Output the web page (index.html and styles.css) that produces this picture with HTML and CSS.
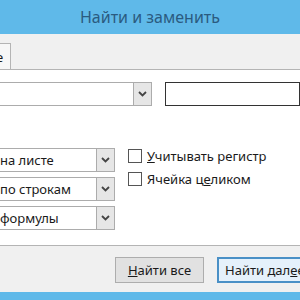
FILE: index.html
```html
<!DOCTYPE html>
<html>
<head>
  <title>Найти и заменить</title>
  <link rel="stylesheet" href="styles.css">
</head>
<body>
  <div class="titlebar">Найти и заменить</div>

  <div class="tabstrip">
    <div class="tab"><span>е</span></div>
  </div>

  <div class="page">
    <div class="row-find">
      <div class="combo wide">
        <div class="combo-value"></div>
        <div class="combo-btn">
          <svg width="9" height="6" viewBox="0 0 9 6"><path d="M1 1 L4.5 4.5 L8 1" fill="none" stroke="#444" stroke-width="1.8"/></svg>
        </div>
      </div>
      <div class="format-box"></div>
    </div>

    <div class="row-options">
      <div class="selects">
        <div class="combo">
          <div class="combo-value">на листе</div>
          <div class="combo-btn">
            <svg width="9" height="6" viewBox="0 0 9 6"><path d="M1 1 L4.5 4.5 L8 1" fill="none" stroke="#444" stroke-width="1.8"/></svg>
          </div>
        </div>
        <div class="combo">
          <div class="combo-value">по строкам</div>
          <div class="combo-btn">
            <svg width="9" height="6" viewBox="0 0 9 6"><path d="M1 1 L4.5 4.5 L8 1" fill="none" stroke="#444" stroke-width="1.8"/></svg>
          </div>
        </div>
        <div class="combo">
          <div class="combo-value">формулы</div>
          <div class="combo-btn">
            <svg width="9" height="6" viewBox="0 0 9 6"><path d="M1 1 L4.5 4.5 L8 1" fill="none" stroke="#444" stroke-width="1.8"/></svg>
          </div>
        </div>
      </div>

      <div class="checks">
        <label class="check"><span class="box"></span><span><u>У</u>читывать регистр</span></label>
        <label class="check"><span class="box"></span><span>Ячейка ц<u>е</u>ликом</span></label>
      </div>
    </div>
  </div>

  <div class="buttons">
    <button class="btn"><u>Н</u>айти все</button>
    <button class="btn default">Найти дал<u>е</u>е</button>
  </div>

  <div class="bottombar"></div>
</body>
</html>
```

FILE: styles.css
```css
body {
  margin: 0;
  padding: 0;
  width: 300px;
  height: 300px;
  overflow: hidden;
  font-family: "Noto Sans", "Open Sans", sans-serif;
  font-size: 13px;
  color: #1a1a1a;
  background: #f0f0f0;
}

.titlebar {
  height: 34px;
  background: #5fb9e9;
  color: #2b5b80;
  font-size: 16px;
  display: flex;
  align-items: center;
  justify-content: center;
}

.tabstrip {
  height: 35px;
  background: #f0f0f0;
  border-bottom: 1px solid #b4b4b4;
  display: flex;
  align-items: flex-end;
}

.tab {
  width: 10px;
  height: 25px;
  border: 1px solid #b4b4b4;
  border-left: none;
  border-bottom: none;
  background: #f7f7f7;
  overflow: hidden;
  display: flex;
  align-items: center;
}

.tab span {
  margin-left: -4px;
}

.page {
  height: 176px;
  background: #fff;
  border-bottom: 1px solid #b4b4b4;
  padding-top: 12px;
  box-sizing: border-box;
}

.row-find {
  display: flex;
  align-items: flex-start;
}

.combo {
  display: flex;
  height: 24px;
  width: 116px;
  margin-left: -1px;
  border: 1px solid #acacac;
  box-sizing: border-box;
  background: #fff;
}

.combo.wide {
  width: 153px;
}

.combo-value {
  flex: 1;
  line-height: 22px;
  white-space: nowrap;
  overflow: hidden;
}

.combo-btn {
  width: 17px;
  background: #e6e6e6;
  border-left: 1px solid #acacac;
  display: flex;
  align-items: center;
  justify-content: center;
}

.format-box {
  margin-left: 13px;
  flex: 1;
  height: 24px;
  border: 1px solid #333;
  box-sizing: border-box;
  background: #fff;
}

.row-options {
  display: flex;
  margin-top: 42px;
}

.selects {
  display: flex;
  flex-direction: column;
  gap: 5px;
}

.checks {
  display: flex;
  flex-direction: column;
  gap: 9px;
  margin-left: 13px;
  padding-top: 1px;
}

.check {
  display: flex;
  align-items: center;
  gap: 5px;
  height: 14px;
}

.box {
  width: 14px;
  height: 14px;
  border: 1px solid #555;
  box-sizing: border-box;
  background: #fff;
}

.buttons {
  height: 46px;
  display: flex;
  align-items: flex-start;
  gap: 13px;
  padding-top: 11px;
  padding-left: 115px;
  box-sizing: border-box;
}

.btn {
  flex: none;
  width: 89px;
  height: 26px;
  font-family: inherit;
  font-size: 13px;
  color: #1a1a1a;
  background: #e1e1e1;
  border: 1px solid #adadad;
  padding: 0;
}

.btn.default {
  width: 96px;
  border: 2px solid #4a90c6;
  background: #e5f1fb;
  text-align: left;
  padding-left: 6px;
}

.bottombar {
  height: 8px;
  background: #5fb9e9;
}
```
